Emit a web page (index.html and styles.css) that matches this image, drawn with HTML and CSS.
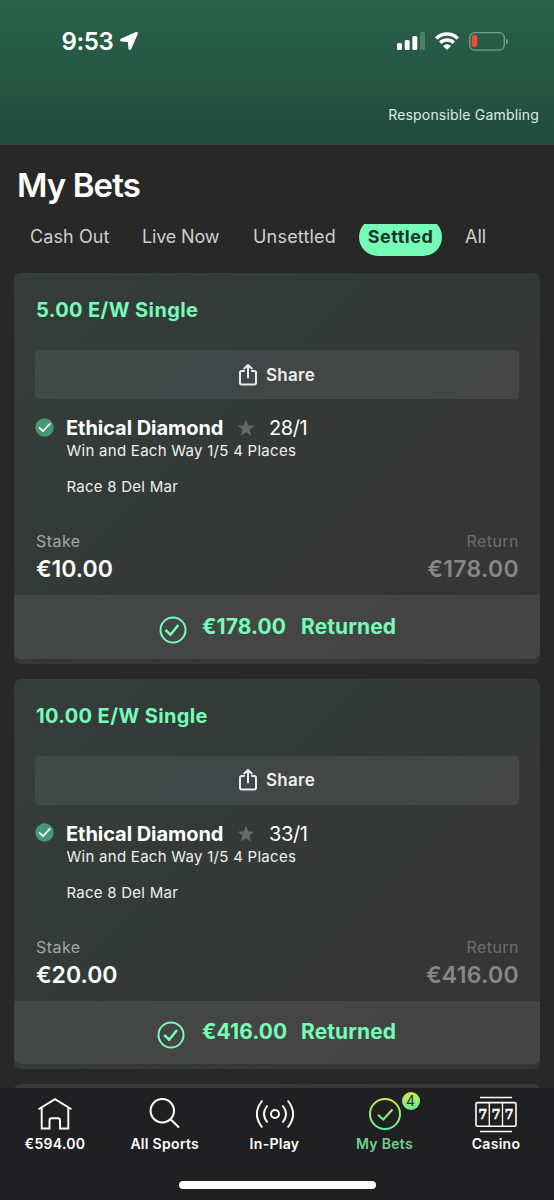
FILE: index.html
```
<!DOCTYPE html>
<html lang="en">
<head>
<meta charset="utf-8">
<title>My Bets</title>
<link rel="stylesheet" href="styles.css">
</head>
<body>
<div class="app">
  <header class="header">
    <div class="status">
      <span class="time">9:53</span>
      <svg class="loc" width="20" height="20" viewBox="0 0 20 20"><path d="M17.200 1.900 2.200 8.600Q1.400 9.300 2.300 9.600L9.600 10.200 10.300 17.700Q10.700 18.600 11.300 17.800L18 2.600Q18.200 1.700 17.200 1.900Z" fill="#fff" stroke="#fff" stroke-width="1.700" stroke-linejoin="round"/></svg>
      <svg class="signal" width="28" height="18" viewBox="0 0 28 18"><g fill="#fff"><rect x="0" y="11" width="5" height="7" rx="1.500"/><rect x="7.700" y="8" width="5" height="10" rx="1.500"/><rect x="15.300" y="4" width="5" height="14" rx="1.500"/></g><rect x="23" y="0" width="5" height="18" rx="1.500" fill="#4b8069"/></svg>
      <svg class="wifi" width="24" height="18" viewBox="0 0 24 18"><g fill="none" stroke="#fff" stroke-width="3.400"><path d="M1.200 6.500a15.300 15.300 0 0 1 21.600 0"/><path d="M5.200 10.800a9.600 9.600 0 0 1 13.600 0"/></g><path d="M8 13.900a5.600 5.600 0 0 1 8 0L12.700 17.200q-.7.6-1.400 0Z" fill="#fff"/></svg>
      <svg class="battery" width="39" height="19" viewBox="0 0 39 19"><rect x=".7" y=".7" width="34.600" height="17.400" rx="5" fill="none" stroke="#779f8e" stroke-width="1.300"/><rect x="2.700" y="3" width="5.600" height="12" rx="2.400" fill="#f04e37"/><path d="M37 6.500q2 .8 2 3t-2 3Z" fill="#779f8e"/></svg>
    </div>
    <div class="responsible">Responsible Gambling</div>
  </header>

  <main class="content">
    <h1 class="page-title">My Bets</h1>
    <nav class="tabs">
      <span class="tab tab-cash">Cash Out</span>
      <span class="tab tab-live">Live Now</span>
      <span class="tab tab-unsettled">Unsettled</span>
      <span class="tab tab-active">Settled</span>
      <span class="tab tab-all">All</span>
    </nav>

    <section class="card">
      <h2 class="card-title">5.00 E/W Single</h2>
      <div class="share">
        <svg width="20" height="24" viewBox="0 0 20 24"><g fill="none" stroke="#ececec" stroke-width="2" stroke-linecap="round" stroke-linejoin="round"><path d="M6 8H3.700Q2 8 2 9.700V19.800Q2 21.500 3.700 21.500H16.300Q18 21.500 18 19.800V9.700Q18 8 16.300 8H14M10 14.500V2.200M6.300 5.500 10 2 13.700 5.500"/></g></svg>
        <span>Share</span>
      </div>
      <div class="pick">
        <svg class="won" width="19" height="19" viewBox="0 0 19 19"><circle cx="9.500" cy="9.500" r="9.200" fill="#459874"/><path d="M4 9.300 8 13 15.300 5.300" fill="none" stroke="#fff" stroke-width="1.700"/></svg>
        <span class="runner">Ethical Diamond</span>
        <svg class="star" width="18" height="18" viewBox="0 0 18 18"><path d="M9 .5 11.200 6.500 17.500 6.700 12.500 10.600 14.300 16.800 9 13.200 3.700 16.800 5.500 10.600.5 6.700 6.800 6.500Z" fill="#656968"/></svg>
        <span class="odds">28/1</span>
      </div>
      <div class="market">Win and Each Way 1/5 4 Places</div>
      <div class="race">Race 8 Del Mar</div>
      <div class="labels"><span class="stake-label">Stake</span><span class="return-label">Return</span></div>
      <div class="amounts"><span class="stake">€10.00</span><span class="return">€178.00</span></div>
      <div class="result result-first">
        <svg class="ring" width="28" height="28" viewBox="0 0 28 28"><g fill="none" stroke="#75fcb6" stroke-width="2"><circle cx="14" cy="14" r="12.500"/><path d="M6.500 14 11.500 18.700 19.300 9" stroke-width="2.500"/></g></svg>
        <span class="paid">€178.00</span><span class="returned">Returned</span>
      </div>
    </section>

    <section class="card">
      <h2 class="card-title">10.00 E/W Single</h2>
      <div class="share">
        <svg width="20" height="24" viewBox="0 0 20 24"><g fill="none" stroke="#ececec" stroke-width="2" stroke-linecap="round" stroke-linejoin="round"><path d="M6 8H3.700Q2 8 2 9.700V19.800Q2 21.500 3.700 21.500H16.300Q18 21.500 18 19.800V9.700Q18 8 16.300 8H14M10 14.500V2.200M6.300 5.500 10 2 13.700 5.500"/></g></svg>
        <span>Share</span>
      </div>
      <div class="pick">
        <svg class="won" width="19" height="19" viewBox="0 0 19 19"><circle cx="9.500" cy="9.500" r="9.200" fill="#459874"/><path d="M4 9.300 8 13 15.300 5.300" fill="none" stroke="#fff" stroke-width="1.700"/></svg>
        <span class="runner">Ethical Diamond</span>
        <svg class="star" width="18" height="18" viewBox="0 0 18 18"><path d="M9 .5 11.200 6.500 17.500 6.700 12.500 10.600 14.300 16.800 9 13.200 3.700 16.800 5.500 10.600.5 6.700 6.800 6.500Z" fill="#656968"/></svg>
        <span class="odds">33/1</span>
      </div>
      <div class="market">Win and Each Way 1/5 4 Places</div>
      <div class="race">Race 8 Del Mar</div>
      <div class="labels"><span class="stake-label">Stake</span><span class="return-label">Return</span></div>
      <div class="amounts"><span class="stake">€20.00</span><span class="return">€416.00</span></div>
      <div class="result result-second">
        <svg class="ring" width="28" height="28" viewBox="0 0 28 28"><g fill="none" stroke="#75fcb6" stroke-width="2"><circle cx="14" cy="14" r="12.500"/><path d="M7.200 14 12.200 18.700 20 9" stroke-width="2.500"/></g></svg>
        <span class="paid">€416.00</span><span class="returned">Returned</span>
      </div>
    </section>

    <section class="card card-next"></section>
  </main>

  <footer class="bottom">
    <nav class="nav">
      <div class="item">
        <svg width="36" height="34" viewBox="0 0 36 34"><path d="M1.500 12.300 18 2.200 34.500 12.300M4.700 11V31.500H12.500V23.200Q12.500 21.200 14.500 21.200H21Q23 21.200 23 23.200V31.500H31.300V11" fill="none" stroke="#fff" stroke-width="1.900"/></svg>
        <span class="label">€594.00</span>
      </div>
      <div class="item">
        <svg width="32" height="34" viewBox="0 0 32 34"><g fill="none" stroke="#fff" stroke-width="2"><circle cx="13.300" cy="13.800" r="11.700"/><path d="M21.300 22 30 30.500"/></g></svg>
        <span class="label">All Sports</span>
      </div>
      <div class="item">
        <svg width="42" height="34" viewBox="0 0 42 34"><g fill="none" stroke="#fff" stroke-width="1.900"><circle cx="21" cy="17" r="4"/><path d="M8.300 3.500Q-2.500 17 8.300 30.500M13.500 8.500Q6.500 17 13.500 25.500M28.500 8.500Q35.500 17 28.500 25.500M33.700 3.500Q44.500 17 33.700 30.500"/></g></svg>
        <span class="label">In-Play</span>
      </div>
      <div class="item item-active">
        <svg width="34" height="34" viewBox="0 0 34 34"><defs><linearGradient id="lime" x1="0" y1="0" x2="0" y2="1"><stop offset="0" stop-color="#d2e94f"/><stop offset="1" stop-color="#5bf0a1"/></linearGradient></defs><g fill="none" stroke="url(#lime)" stroke-width="2"><circle cx="17" cy="17" r="15"/><path d="M10 17.700 15.300 22.500 24.500 12.500"/></g></svg>
        <span class="badge">4</span>
        <span class="label">My Bets</span>
      </div>
      <div class="item">
        <svg class="slots" width="42" height="37" viewBox="0 0 42 37"><g fill="none" stroke="#fff" stroke-width="1.600"><path d="M5 1.500H37M5 35.500H37"/><rect x="1" y="6.600" width="40" height="23.600" rx="1.500"/><path d="M14.300 6.300V30.300M27.500 6.300V30.300" stroke-width="1.300"/></g><g class="seven"><text x="7.800" y="22.800">7</text><text x="21" y="22.800">7</text><text x="34.100" y="22.800">7</text></g></svg>
        <span class="label">Casino</span>
      </div>
    </nav>
    <div class="home-bar"></div>
  </footer>
</div>
</body>
</html>
```
FILE: styles.css
```
* { box-sizing: border-box; }
body { margin: 0; font-family: Inter, "Liberation Sans", sans-serif; color: #fff; background: #282828; }
svg { display: block; flex: none; }
.app { width: 554px; height: 1200px; overflow: hidden; display: flex; flex-direction: column; }
span, h1, h2, .responsible, .market, .race { white-space: nowrap; }

.header { height: 145px; flex: none; background: linear-gradient(#29634b, #224a3d); border-bottom: 1px solid #354740; }
.status { height: 83px; padding-left: 61.500px; display: flex; align-items: center; }
.time { width: 57.500px; font-size: 24px; font-weight: 600; letter-spacing: -.4px; }
.loc { margin-top: -1px; }
.signal { margin-left: 258px; margin-top: -1px; }
.wifi { margin-left: 10px; margin-top: -1px; }
.battery { margin-left: 10px; }
.responsible { margin-top: 20px; padding-right: 15px; line-height: 24px; text-align: right; font-size: 14px; letter-spacing: .18px; color: #dcebe4; }

.content { height: 943px; overflow: hidden; }
.page-title { margin: 20px 0 0 17px; font-size: 33px; line-height: 40px; font-weight: 600; letter-spacing: -.9px; }
.tabs { height: 32px; margin: 19px 0 17px 30px; display: flex; align-items: flex-end; overflow: hidden; }
.tab { flex: none; height: 38px; line-height: 38px; font-size: 18px; color: #cfcfcf; }
.tab-cash { width: 112px; letter-spacing: .1px; }
.tab-live { width: 111px; letter-spacing: -.15px; }
.tab-unsettled { width: 106px; letter-spacing: .2px; }
.tab-active { width: 83px; margin-right: 23px; border-radius: 19px; background: #75fcb6; color: #16382b; font-weight: 700; letter-spacing: .5px; text-align: center; }

.card { width: 526px; height: 390.500px; margin: 0 0 15px 14px; padding-top: 25px; border-radius: 7px; background: linear-gradient(135deg, #353d3a 0%, #333a38 35%, #363736 65%, #353535 100%); }
.card-title { margin: 0 0 27px 22px; font-size: 20px; line-height: 25px; height: 25px; font-weight: 700; letter-spacing: .38px; color: #75fcb6; }
.share { width: 484px; height: 49px; margin-left: 21px; padding-right: 1px; border-radius: 4px; background: rgba(255,255,255,.07); display: flex; align-items: center; justify-content: center; gap: 8px; font-size: 17px; font-weight: 600; letter-spacing: .3px; color: #ececec; }
.pick { height: 26px; margin: 16px 0 0 21px; display: flex; align-items: center; }
.won { margin: -2px 12px 0 0; }
.runner { width: 171px; font-size: 20px; font-weight: 700; letter-spacing: -.05px; }
.star { margin-right: 14px; }
.odds { font-size: 20px; letter-spacing: -.4px; }
.market { margin-left: 52.500px; font-size: 15px; line-height: 19px; letter-spacing: .27px; color: #f0f0f0; }
.race { margin: 18px 0 0 52.500px; height: 18px; font-size: 15px; line-height: 18px; letter-spacing: .25px; color: #f0f0f0; }
.labels, .amounts { padding: 0 21px 0 22px; display: flex; justify-content: space-between; }
.labels { margin-top: 36px; height: 19px; font-size: 16px; line-height: 19px; letter-spacing: .45px; }
.stake-label { color: #a4a6a5; }
.return-label { color: #6d6e6d; }
.amounts { margin-top: 4px; height: 28px; font-size: 23px; line-height: 28px; font-weight: 600; }
.return { letter-spacing: .3px; color: #868787; }
.result { height: 63.500px; margin-top: 12px; padding-bottom: 1px; border-radius: 0 0 7px 7px; background: rgba(255,255,255,.075); display: flex; align-items: center; font-size: 21px; font-weight: 700; letter-spacing: .1px; color: #75fcb6; }
.result-first { padding-left: 145px; }
.result-second { padding-left: 143px; }
.ring { margin-top: 7px; }
.paid { width: 99px; margin-left: 15px; }
.result-second .paid { margin-left: 17px; }
.card-next { margin-bottom: 0; }

.bottom { height: 112px; flex: none; background: #202022; }
.nav { height: 93px; display: grid; grid-template-columns: 110px 109.500px 110px 110px 113px; }
.item { position: relative; padding-top: 9px; display: flex; flex-direction: column; align-items: center; }
.label { height: 20px; margin-top: 3px; line-height: 20px; font-size: 14px; font-weight: 600; letter-spacing: .3px; }
.item-active .label { color: #72cf95; }
.badge { position: absolute; left: 72px; top: 4px; width: 18px; height: 18px; border-radius: 50%; background: linear-gradient(#cdea55, #64eb9e); color: #243526; font-size: 14px; line-height: 18px; text-align: center; }
.slots { margin: -1px 0 -2px; }
.seven { fill: #fff; stroke: #fff; stroke-width: .5px; font-family: "DejaVu Serif", serif; font-size: 12.500px; font-weight: 700; text-anchor: middle; }
.home-bar { width: 197px; height: 8px; margin-left: 179px; border-radius: 4px; background: #fff; }
```
